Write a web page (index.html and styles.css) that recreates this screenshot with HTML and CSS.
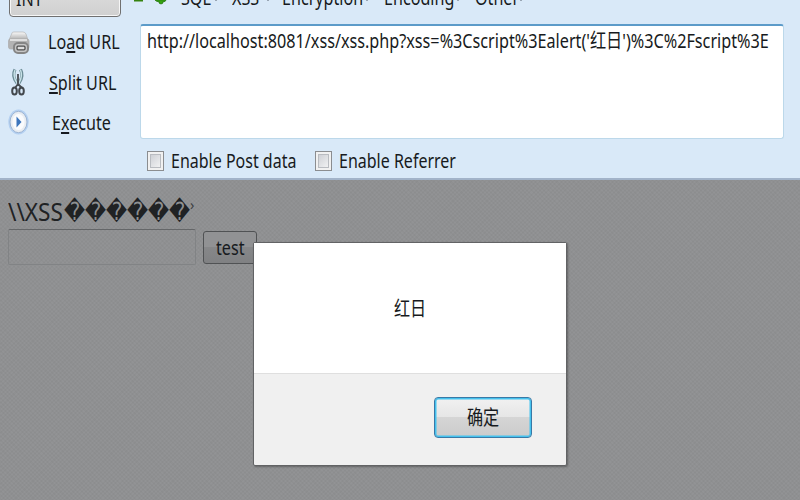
FILE: index.html
```html
<!DOCTYPE html>
<html lang="zh-CN">
<head>
<meta charset="utf-8">
<title>HackBar</title>
<link rel="stylesheet" href="styles.css">
</head>
<body>
<header class="hackbar">
  <div class="menu-row">
    <div class="select"><span class="t">INT</span></div>
    <svg class="plusminus" width="36" height="8" viewBox="0 0 36 8"><path d="M1 0h9v1.500h-9z" fill="#35830f"/><path d="M22 0h11l-1 1.500h-2v1.500q-2 2-4 0V1.500h-2z" fill="#35a510" stroke="#287911" stroke-width=".8"/></svg>
    <nav class="menu">
      <span class="item sql"><span class="t">SQL</span><i></i></span>
      <span class="item xss"><span class="t">XSS</span><i></i></span>
      <span class="item encryption"><span class="t">Encryption</span><i></i></span>
      <span class="item encoding"><span class="t">Encoding</span><i></i></span>
      <span class="item other"><span class="t">Other</span><i></i></span>
    </nav>
  </div>
  <div class="work">
    <div class="actions">
      <div class="action load">
        <svg width="24" height="26" viewBox="0 0 24 26">
          <defs><linearGradient id="metal" x2="0" y2="1"><stop stop-color="#fafafa"/><stop offset="1" stop-color="#aaa"/></linearGradient></defs>
          <path d="M5 3Q5 2 7 2h9q2 0 3 2l2 6H2z" fill="url(#metal)" stroke="#b5b5b5" stroke-width=".7"/>
          <rect x="1.500" y="9" width="20.500" height="10" rx="2" fill="#b3b3b3" stroke="#aaa" stroke-width=".7"/>
          <path d="M3 10h17" stroke="#eee" stroke-width="1.500"/>
          <rect x="7" y="13" width="14" height="10" rx="4" fill="#c6c6c6" stroke="#858585" stroke-width="2"/>
          <rect x="10" y="16.200" width="8" height="3.600" rx="1" fill="#ddd" stroke="#505050" stroke-width="1.300"/>
        </svg>
        <span class="label"><span class="t">Lo<u>a</u>d URL</span></span>
      </div>
      <div class="action split">
        <svg width="24" height="32" viewBox="0 0 24 32">
          <path d="M8 3.500Q4.500 10 10 17M13.500 3.500q3.500 6.500-1.500 13.500" fill="none" stroke="#6b8c96" stroke-width="3.200"/>
          <path d="M8 4Q5.500 10 10 17M13.500 4q2.500 6-1.500 13" fill="none" stroke="#c8e2e8" stroke-width="1.400"/>
          <path d="M11 8v12M11 18l-3 4M11 18l4 4" stroke="#454b50" stroke-width="1.800" fill="none"/>
          <ellipse cx="7.500" cy="25" rx="2.300" ry="3.500" fill="none" stroke="#42474c" stroke-width="2"/>
          <ellipse cx="14.500" cy="25" rx="2.300" ry="3.500" fill="none" stroke="#42474c" stroke-width="2"/>
        </svg>
        <span class="label"><span class="t"><u>S</u>plit URL</span></span>
      </div>
      <div class="action execute">
        <svg width="24" height="26" viewBox="0 0 24 26">
          <ellipse cx="11.500" cy="13" rx="10.200" ry="12.500" fill="#b4d0f1"/>
          <ellipse cx="11.500" cy="13" rx="8.500" ry="10.700" fill="#e9edf2" stroke="#9db4d2"/>
          <ellipse cx="11.500" cy="13" rx="6" ry="8" fill="#fafbfd"/>
          <path d="M9.500 7.500 14.500 13 9.500 18.500z" fill="#3c75bc"/>
        </svg>
        <span class="label"><span class="t">E<u>x</u>ecute</span></span>
      </div>
    </div>
    <div class="fields">
      <div class="url"><span class="t">http://localhost:8081/xss/xss.php?xss=%3Cscript%3Ealert('红日')%3C%2Fscript%3E</span></div>
      <div class="checks">
        <label class="check post"><span class="box"></span><span class="t">Enable Post data</span></label>
        <label class="check"><span class="box"></span><span class="t">Enable Referrer</span></label>
      </div>
    </div>
  </div>
</header>
<main class="page">
  <div class="heading"><span class="xss-title">\\XSS</span><span class="broken">������</span><span class="tail">›</span></div>
  <div class="form"><div class="input"></div><div class="test"><span class="t">test</span></div></div>
</main>
<section class="dialog">
  <div class="message"><span class="t mid">红日</span></div>
  <div class="footer"><div class="ok"><span class="t mid">确定</span></div></div>
</section>
</body>
</html>
```
FILE: styles.css
```css
* { box-sizing: border-box; }
body {
  margin: 0;
  width: 800px;
  height: 500px;
  overflow: hidden;
  position: relative;
  font: 20px/24px "Noto Sans", "Noto Sans CJK SC", sans-serif;
  color: #171a20;
}
.t {
  display: inline-block;
  white-space: nowrap;
  transform: scaleX(.806);
  transform-origin: 0 50%;
}
.t.mid { transform-origin: 50% 50%; }
u { text-decoration-thickness: 1.5px; text-underline-offset: 2px; text-decoration-skip-ink: none; }

.hackbar { height: 180px; background: #d9e9f8; border-bottom: 2px solid #a2b3c9; overflow: hidden; }
.menu-row { height: 24px; display: flex; align-items: flex-start; padding-left: 9px; }
.select {
  width: 112px;
  height: 30px;
  margin-top: -13px;
  padding: 0 0 0 6px;
  line-height: 22px;
  border: 1px solid #707070;
  border-radius: 4px;
  box-shadow: inset 0 0 0 1px #f6f6f6;
  background: linear-gradient(#ddd, #d0d0d0);
}
.plusminus { margin-left: 12px; }
.menu { display: flex; margin: -14px 0 0 12px; }
.item { position: relative; flex: none; height: 24px; }
.item i {
  position: absolute;
  right: 12px;
  top: 13px;
  border: 2px solid transparent;
  border-top-color: #5a6470;
  border-bottom: 0;
}
.sql { width: 51px; }
.item.sql i { right: 14px; }
.xss { width: 50px; }
.encryption { width: 102px; }
.item.encryption i { right: 15px; }
.encoding { width: 91px; }
.item.encoding i { right: 15px; }
.other { width: 60px; }

.work { display: flex; }
.actions { width: 140px; padding: 5px 0 0 7px; }
.action { display: flex; align-items: center; height: 27px; }
.action svg { flex: none; }
.label { margin-left: 17px; width: 85px; height: 24px; position: relative; top: 1px; }
.load .label { top: -1px; }
.split { margin-top: 10px; height: 32px; }
.split .label { margin-left: 18px; }
.execute { margin-top: 10px; }
.execute .label { margin-left: 21px; }
.fields { width: 644px; }
.url {
  height: 115px;
  padding: 3px 0 0 6px;
  background: #fff;
  border: 1px solid #bcd8ea;
  border-top: 2px solid #5c9bc9;
  border-radius: 3px;
}
.url .t { transform: scaleX(.8095); }
.checks { display: flex; padding: 10px 0 0 7px; }
.check { display: flex; align-items: center; width: 168px; }
.check .t { transform: scaleX(.8); }
.box {
  flex: none;
  width: 17px;
  height: 20px;
  margin-right: 7px;
  border: 1px solid #8b8d90;
  background: linear-gradient(135deg, #c5c8ce, #fafafa);
  box-shadow: inset 0 0 0 2px #f1f1f1, inset 0 0 0 3px #b9bcc1;
}

.page {
  height: 320px;
  padding: 17px 0 0 8px;
  background-color: #929395;
  background-image: repeating-linear-gradient(45deg, rgba(0,0,0,.025) 0 1.5px, transparent 1.5px 3px), repeating-linear-gradient(-45deg, rgba(0,0,0,.025) 0 1.5px, transparent 1.5px 3px);
}
.heading { display: flex; height: 28px; line-height: 28px; color: #202224; }
.xss-title { width: 56px; font-size: 26px; white-space: nowrap; transform: scaleX(.87); transform-origin: 0 50%; }
.broken { width: 127px; font: 25px/29px "DejaVu Sans", sans-serif; white-space: nowrap; transform: scaleX(.82); transform-origin: 0 50%; }
.tail { font-size: 14px; line-height: 15px; margin-left: -1px; color: #3c3e40; }
.form { display: flex; margin-top: 4px; }
.input { width: 188px; height: 36px; border: 1px solid #818385; border-top-color: #646668; border-radius: 2px; }
.test {
  width: 54px;
  height: 33px;
  margin: 2px 0 0 7px;
  padding: 4px 0 0 12px;
  border: 1px solid #505254;
  border-radius: 3px;
  background: linear-gradient(#919294 50%, #868789 50%, #808183);
}

.dialog {
  position: absolute;
  left: 253px;
  top: 242px;
  width: 314px;
  height: 224px;
  border: 1px solid #626365;
  border-radius: 2px;
  background: #f0f0f0;
  box-shadow: 1px 1px 2px rgba(0,0,0,.3);
}
.message { height: 131px; padding-top: 2px; background: #fff; border-bottom: 1px solid #dfdfdf; display: flex; align-items: center; justify-content: center; }
.footer { display: flex; justify-content: flex-end; padding: 23px 34px 0 0; }
.ok {
  display: flex;
  align-items: center;
  justify-content: center;
  width: 98px;
  height: 41px;
  border: 1px solid #3979a6;
  border-radius: 4px;
  background: linear-gradient(#f1f1f1 0, #e6e6e6 48%, #d5d5d5 50%, #cbcbcb);
  box-shadow: inset 0 0 0 1.5px #45c2ee;
}
```
